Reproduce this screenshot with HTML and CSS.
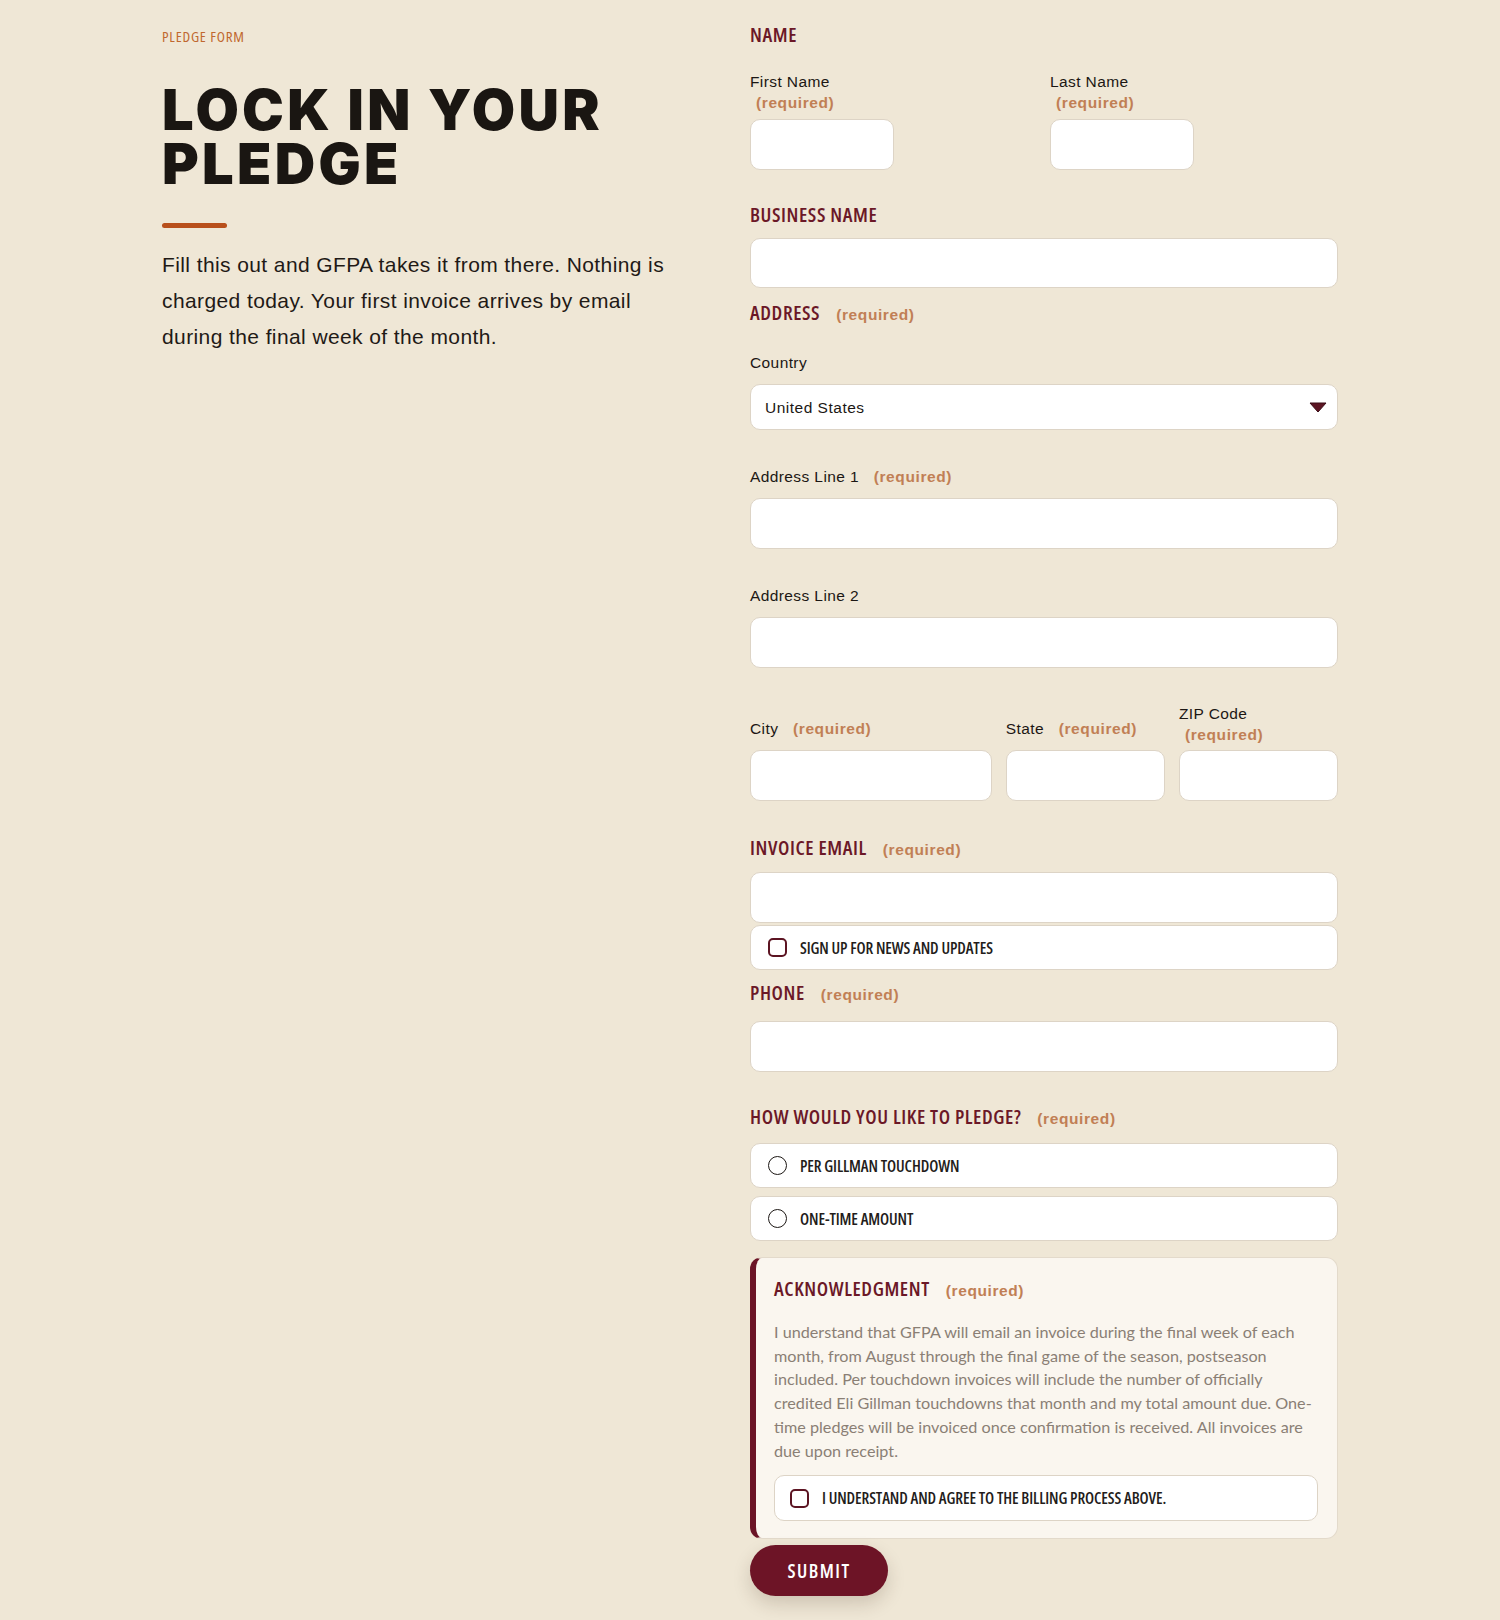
FILE: index.html
```html
<!DOCTYPE html>
<html lang="en">
<head>
<meta charset="utf-8">
<title>Lock in your pledge</title>
<link rel="stylesheet" href="styles.css">
</head>
<body>
<div class="page">
  <section class="intro">
    <p class="eyebrow">Pledge Form</p>
    <h1 class="title">Lock in your pledge</h1>
    <div class="rule"></div>
    <p class="lead">Fill this out and GFPA takes it from there. Nothing is charged today. Your first invoice arrives by email during the final week of the month.</p>
  </section>

  <form class="form">
    <h2 class="sec">Name</h2>
    <div class="name-row">
      <div class="field">
        <label class="lbl">First Name<span class="req req-block">(required)</span></label>
        <input class="inp inp-short" type="text">
      </div>
      <div class="field">
        <label class="lbl">Last Name<span class="req req-block">(required)</span></label>
        <input class="inp inp-short" type="text">
      </div>
    </div>

    <h2 class="sec sec-business">Business Name</h2>
    <input class="inp inp-business" type="text">

    <h2 class="sec sec-address">Address <span class="req req-sec">(required)</span></h2>
    <label class="lbl lbl-country">Country</label>
    <div class="select-wrap">
      <select class="sel">
        <option>United States</option>
      </select>
      <svg class="sel-arrow" width="18" height="11" viewBox="0 0 18 11"><path d="M1 1 L17 1 L9 10 Z" fill="#5c1422" stroke="#3a0d16" stroke-width="1" stroke-linejoin="round"/></svg>
    </div>

    <label class="lbl lbl-line">Address Line 1 <span class="req req-inline">(required)</span></label>
    <input class="inp inp-line" type="text">

    <label class="lbl lbl-line">Address Line 2</label>
    <input class="inp inp-line" type="text">

    <div class="city-row">
      <div class="cell">
        <label class="lbl lbl-cell">City <span class="req req-inline">(required)</span></label>
        <input class="inp" type="text">
      </div>
      <div class="cell">
        <label class="lbl lbl-cell">State <span class="req req-inline">(required)</span></label>
        <input class="inp" type="text">
      </div>
      <div class="cell">
        <label class="lbl lbl-stack">ZIP Code<span class="req req-block">(required)</span></label>
        <input class="inp" type="text">
      </div>
    </div>

    <h2 class="sec sec-email">Invoice Email <span class="req req-sec">(required)</span></h2>
    <input class="inp" type="email">
    <label class="choice choice-news">
      <span class="box"></span>
      <span class="choice-text">Sign up for news and updates</span>
    </label>

    <h2 class="sec sec-phone">Phone <span class="req req-sec">(required)</span></h2>
    <input class="inp inp-phone" type="tel">

    <h2 class="sec sec-pledge">How would you like to pledge? <span class="req req-sec">(required)</span></h2>
    <label class="choice">
      <span class="radio"></span>
      <span class="choice-text">Per Gillman Touchdown</span>
    </label>
    <label class="choice choice-second">
      <span class="radio"></span>
      <span class="choice-text">One-time amount</span>
    </label>

    <div class="ack">
      <h2 class="sec sec-ack">Acknowledgment <span class="req req-sec">(required)</span></h2>
      <p class="ack-text">I understand that GFPA will email an invoice during the final week of each month, from August through the final game of the season, postseason included. Per touchdown invoices will include the number of officially credited Eli Gillman touchdowns that month and my total amount due. One-time pledges will be invoiced once confirmation is received. All invoices are due upon receipt.</p>
      <label class="choice choice-ack">
        <span class="box"></span>
        <span class="choice-text">I understand and agree to the billing process above.</span>
      </label>
    </div>

    <button class="submit" type="button">Submit</button>
  </form>
</div>
</body>
</html>
```

FILE: styles.css
```css
* { box-sizing: border-box; }

html, body {
  margin: 0;
  padding: 0;
  background: #efe7d6;
}

body {
  font-family: "Liberation Sans", Arial, sans-serif;
  color: #1c1714;
}

.page {
  width: 1176px;
  margin: 0 auto;
  padding: 23px 0 24px;
  display: grid;
  grid-template-columns: 588px 588px;
}

/* ---------- intro ---------- */
.intro {
  padding-top: 4px;
}

.eyebrow {
  margin: 0;
  font-family: "Open Sans", sans-serif;
  font-stretch: 75%;
  font-weight: 400;
  font-size: 15px;
  line-height: 18px;
  letter-spacing: 0.8px;
  text-transform: uppercase;
  color: #c0672f;
}

.title {
  margin: 38px 0 0;
  font-family: Inter, "Liberation Sans", sans-serif;
  font-weight: 900;
  font-size: 56px;
  line-height: 54px;
  letter-spacing: 3.3px;
  text-transform: uppercase;
  color: #1a1612;
  max-width: 560px;
}

.rule {
  width: 65px;
  height: 5px;
  border-radius: 3px;
  background: #b8501c;
  margin-top: 32px;
}

.lead {
  margin: 19px 0 0;
  max-width: 520px;
  font-size: 21px;
  line-height: 36px;
  letter-spacing: 0.4px;
  color: #1f1a16;
}

/* ---------- form ---------- */
.form {
  display: flex;
  flex-direction: column;
  align-items: stretch;
}

.sec {
  margin: 0;
  height: 24px;
  display: flex;
  align-items: baseline;
  font-family: "Open Sans", sans-serif;
  font-stretch: 75%;
  font-weight: 600;
  font-size: 20px;
  line-height: 24px;
  letter-spacing: 0.6px;
  text-transform: uppercase;
  color: #6b1827;
}

.req {
  font-family: "Liberation Sans", Arial, sans-serif;
  font-stretch: normal;
  font-weight: 700;
  font-size: 15.5px;
  letter-spacing: 0.6px;
  text-transform: none;
  color: #c17f55;
}

.req-sec { margin-left: 16px; line-height: 24px; }
.req-inline { margin-left: 10px; }
.req-block { display: block; padding-left: 6px; }

.lbl {
  display: block;
  font-size: 15.5px;
  line-height: 21px;
  letter-spacing: 0.4px;
  color: #1c1714;
}

.inp {
  display: block;
  width: 100%;
  height: 51px;
  background: #ffffff;
  border: 1px solid #ddd4c6;
  border-radius: 10px;
  font-family: "Liberation Sans", Arial, sans-serif;
  font-size: 15px;
  padding: 0 15px;
  outline: none;
}

.inp-short { width: 144px; }
.inp-business { height: 50px; }

.name-row {
  margin-top: 24px;
  display: grid;
  grid-template-columns: 300px 1fr;
}

.name-row .inp { margin-top: 6px; }

.sec-business { margin-top: 33px; margin-bottom: 11px; }
.sec-address { margin-top: 13px; }

.lbl-country { margin-top: 27px; margin-bottom: 11px; }

.select-wrap {
  position: relative;
  height: 46px;
}

.sel {
  appearance: none;
  -webkit-appearance: none;
  width: 100%;
  height: 46px;
  background: #ffffff;
  border: 1px solid #ddd4c6;
  border-radius: 10px;
  padding: 0 40px 0 14px;
  font-family: "Liberation Sans", Arial, sans-serif;
  font-size: 15.5px;
  letter-spacing: 0.5px;
  color: #1c1714;
  outline: none;
}

.sel-arrow {
  position: absolute;
  right: 11px;
  top: 18px;
  pointer-events: none;
}

.lbl-line { margin-top: 36px; }
.inp-line { margin-top: 11px; }

.city-row {
  margin-top: 35px;
  display: grid;
  grid-template-columns: 1.52fr 1fr 1fr;
  column-gap: 14px;
}

.cell {
  display: flex;
  flex-direction: column;
  justify-content: flex-end;
}

.lbl-cell { margin-bottom: 11px; }
.lbl-stack { margin-bottom: 5px; }

.sec-email { margin-top: 35px; margin-bottom: 12px; }

.choice {
  display: flex;
  align-items: center;
  height: 45px;
  padding-left: 17px;
  background: #ffffff;
  border: 1px solid #ddd4c6;
  border-radius: 10px;
}

.choice-news { margin-top: 2px; }
.choice-second { margin-top: 8px; }

.box {
  width: 19px;
  height: 19px;
  border: 2px solid #5c1422;
  border-radius: 5px;
  flex: none;
}

.radio {
  width: 19px;
  height: 19px;
  border: 1.5px solid #1c1714;
  border-radius: 50%;
  flex: none;
}

.choice-text {
  margin-left: 13px;
  font-family: "Open Sans", sans-serif;
  font-stretch: 75%;
  font-weight: 600;
  font-size: 16px;
  letter-spacing: -0.1px;
  text-transform: uppercase;
  color: #231c1a;
}

.sec-phone { margin-top: 11px; margin-bottom: 16px; }
.sec-pledge { margin-top: 33px; margin-bottom: 14px; }

.ack {
  margin-top: 16px;
  background: #faf6ef;
  border: 1px solid #e3dacb;
  border-left: 6px solid #6b1426;
  border-radius: 12px;
  padding: 19px 19px 17px 18px;
}

.ack-text {
  margin: 19px 0 0;
  font-family: Lato, "Liberation Sans", sans-serif;
  font-size: 16.2px;
  line-height: 23.7px;
  color: #8a7f75;
}

.choice-ack {
  margin-top: 13px;
  height: 46px;
  padding-left: 15px;
}

.submit {
  margin-top: 6px;
  align-self: flex-start;
  width: 138px;
  height: 51px;
  border: none;
  border-radius: 26px;
  background: #6d1426;
  color: #ffffff;
  font-family: "Open Sans", sans-serif;
  font-stretch: 75%;
  font-weight: 600;
  font-size: 19px;
  letter-spacing: 1.5px;
  text-transform: uppercase;
  box-shadow: 0 8px 18px rgba(60, 40, 20, 0.18);
  cursor: pointer;
}
```
